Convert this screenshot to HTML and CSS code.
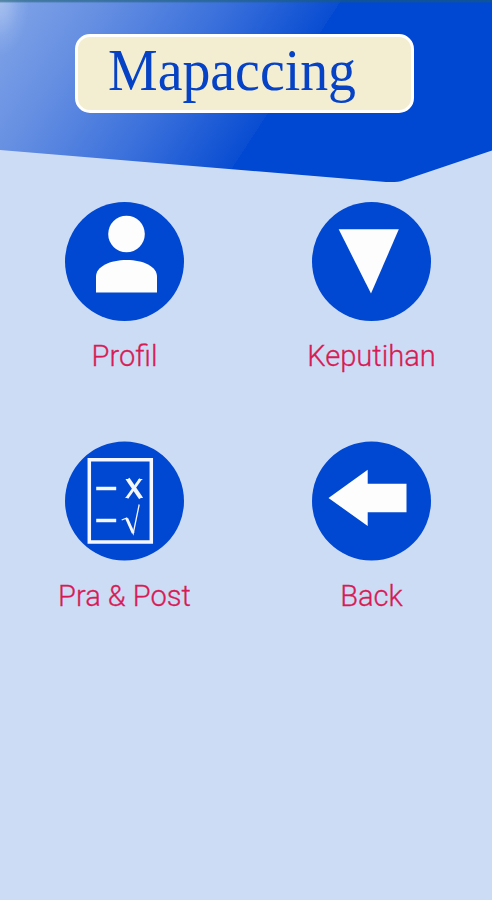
FILE: index.html
```html
<!DOCTYPE html>
<html lang="id">
<head>
<meta charset="utf-8">
<title>Mapaccing</title>
<link rel="stylesheet" href="styles.css">
</head>
<body>
<header class="header">
  <svg class="header-shape" viewBox="0 0 492 184" aria-hidden="true">
    <defs>
      <linearGradient id="sheen" gradientUnits="userSpaceOnUse" x1="0" y1="0" x2="240" y2="156">
        <stop offset="0" stop-color="#82a5e8"/>
        <stop offset=".3" stop-color="#6790e2"/>
        <stop offset=".65" stop-color="#3d72dc"/>
        <stop offset="1" stop-color="#094dd2"/>
        <stop offset="1" stop-color="#0047d1"/>
      </linearGradient>
      <radialGradient id="glow" gradientUnits="userSpaceOnUse" cx="0" cy="0" r="56" gradientTransform="scale(.52 1)">
        <stop offset="0" stop-color="#fff" stop-opacity=".3"/>
        <stop offset=".3" stop-color="#fff" stop-opacity=".22"/>
        <stop offset=".65" stop-color="#fff" stop-opacity=".08"/>
        <stop offset="1" stop-color="#fff" stop-opacity="0"/>
      </radialGradient>
      <linearGradient id="status" x1="0" y1="0" x2="0" y2="1">
        <stop offset="0" stop-color="#195d72" stop-opacity=".62"/>
        <stop offset=".6" stop-color="#195d72" stop-opacity=".5"/>
        <stop offset="1" stop-color="#195d72" stop-opacity="0"/>
      </linearGradient>
    </defs>
    <path d="M0 0H492V150.500L403 180.500Q398 182.500 386 182L0 150Z" fill="url(#sheen)"/>
    <path d="M0 0H60V60H0Z" fill="url(#glow)"/>
    <path d="M0 0H492V3H0Z" fill="url(#status)"/>
  </svg>
  <h1 class="title">
    <svg class="title-text" viewBox="0 0 332 72">
      <text x="30" y="52.500" textLength="248" lengthAdjust="spacingAndGlyphs">Mapaccing</text>
    </svg>
  </h1>
</header>
<main class="menu">
  <a class="item">
    <svg class="icon" viewBox="0 0 120 120" aria-hidden="true">
      <circle class="disc" cx="60.500" cy="60.500" r="59.500"/>
      <circle class="glyph" cx="62.500" cy="33" r="18.300"/>
      <path class="glyph" d="M32 91.500V75.500C32 65.500 46 59 62.700 59S93 65.500 93 75.500V91.500Z"/>
    </svg>
    <span class="label">Profil</span>
  </a>
  <a class="item">
    <svg class="icon" viewBox="0 0 120 120" aria-hidden="true">
      <circle class="disc" cx="60.500" cy="60.500" r="59.500"/>
      <path class="glyph" d="M27.700 28.300H87.800L60 92.500Z"/>
    </svg>
    <span class="label">Keputihan</span>
  </a>
  <a class="item">
    <svg class="icon" viewBox="0 0 120 120" aria-hidden="true">
      <circle class="disc" cx="60.500" cy="60" r="59.500"/>
      <path class="frame" d="M25.300 18.800H87.300V101H25.300Z"/>
      <path class="dash" d="M32.200 47.500H52.200M32.200 79.500H52.200"/>
      <path class="cross" d="M63.800 38L76.800 57"/>
      <path class="cross-thin" d="M76.500 38L63 57"/>
      <path class="cross-foot" d="M61.800 38.500H66M74.500 38.500H78.300M61.500 56.500H64.500M75 56.500H78.800"/>
      <path class="tick-thin" d="M57.700 79L62.700 77L69.200 92.500L75.200 63.500"/>
      <path class="tick" d="M62.700 77.500L69.200 92"/>
    </svg>
    <span class="label">Pra &amp; Post</span>
  </a>
  <a class="item">
    <svg class="icon" viewBox="0 0 120 120" aria-hidden="true">
      <circle class="disc" cx="60.500" cy="60" r="59.500"/>
      <path class="glyph" d="M17.500 57L56.700 28.800V42.800H95.500V71.200H56.700V85Z"/>
    </svg>
    <span class="label">Back</span>
  </a>
</main>
</body>
</html>
```
FILE: styles.css
```css
* {
  box-sizing: border-box;
}

body {
  margin: 0;
  min-height: 900px;
  background: #ccdcf5;
  font-family: Roboto, "Liberation Sans", sans-serif;
}

.header {
  position: relative;
  height: 184px;
  padding: 34px 78px 0 74.500px;
}

.header-shape {
  position: absolute;
  inset: 0;
  width: 100%;
  height: 184px;
}

.title {
  position: relative;
  margin: 0;
  height: 78.500px;
  border: 3px solid #fff;
  border-radius: 15px;
  background: #f3edd1;
  font-weight: 400;
}

.title-text {
  display: block;
  width: 332px;
  height: 72px;
  fill: #0542c6;
  font-family: "Liberation Serif", serif;
  font-size: 59px;
}

.menu {
  display: grid;
  grid-template-columns: 247px 247px;
  grid-auto-rows: 240px;
  padding-top: 17px;
  margin-left: 1px;
}

.item {
  display: flex;
  flex-direction: column;
  align-items: center;
}

.icon {
  width: 120px;
  height: 120px;
  margin-left: -1px;
}

.disc {
  fill: #0047d1;
}

.glyph {
  fill: #fdfdfe;
}

.frame,
.dash,
.cross,
.cross-thin,
.cross-foot,
.tick,
.tick-thin {
  fill: none;
  stroke: #f4f7ff;
}

.frame {
  stroke-width: 3.500;
}

.dash {
  stroke-width: 3.500;
}

.cross {
  stroke-width: 4;
}

.cross-thin {
  stroke-width: 3;
}

.cross-foot {
  stroke-width: 1.200;
}

.tick {
  stroke-width: 3;
}

.tick-thin {
  stroke-width: 1.300;
}

.label {
  margin-top: 18px;
  font-size: 29.100px;
  font-weight: 300;
  line-height: 34px;
  white-space: nowrap;
  color: #d81b55;
  -webkit-text-stroke: .3px #d81b55;
}
```
